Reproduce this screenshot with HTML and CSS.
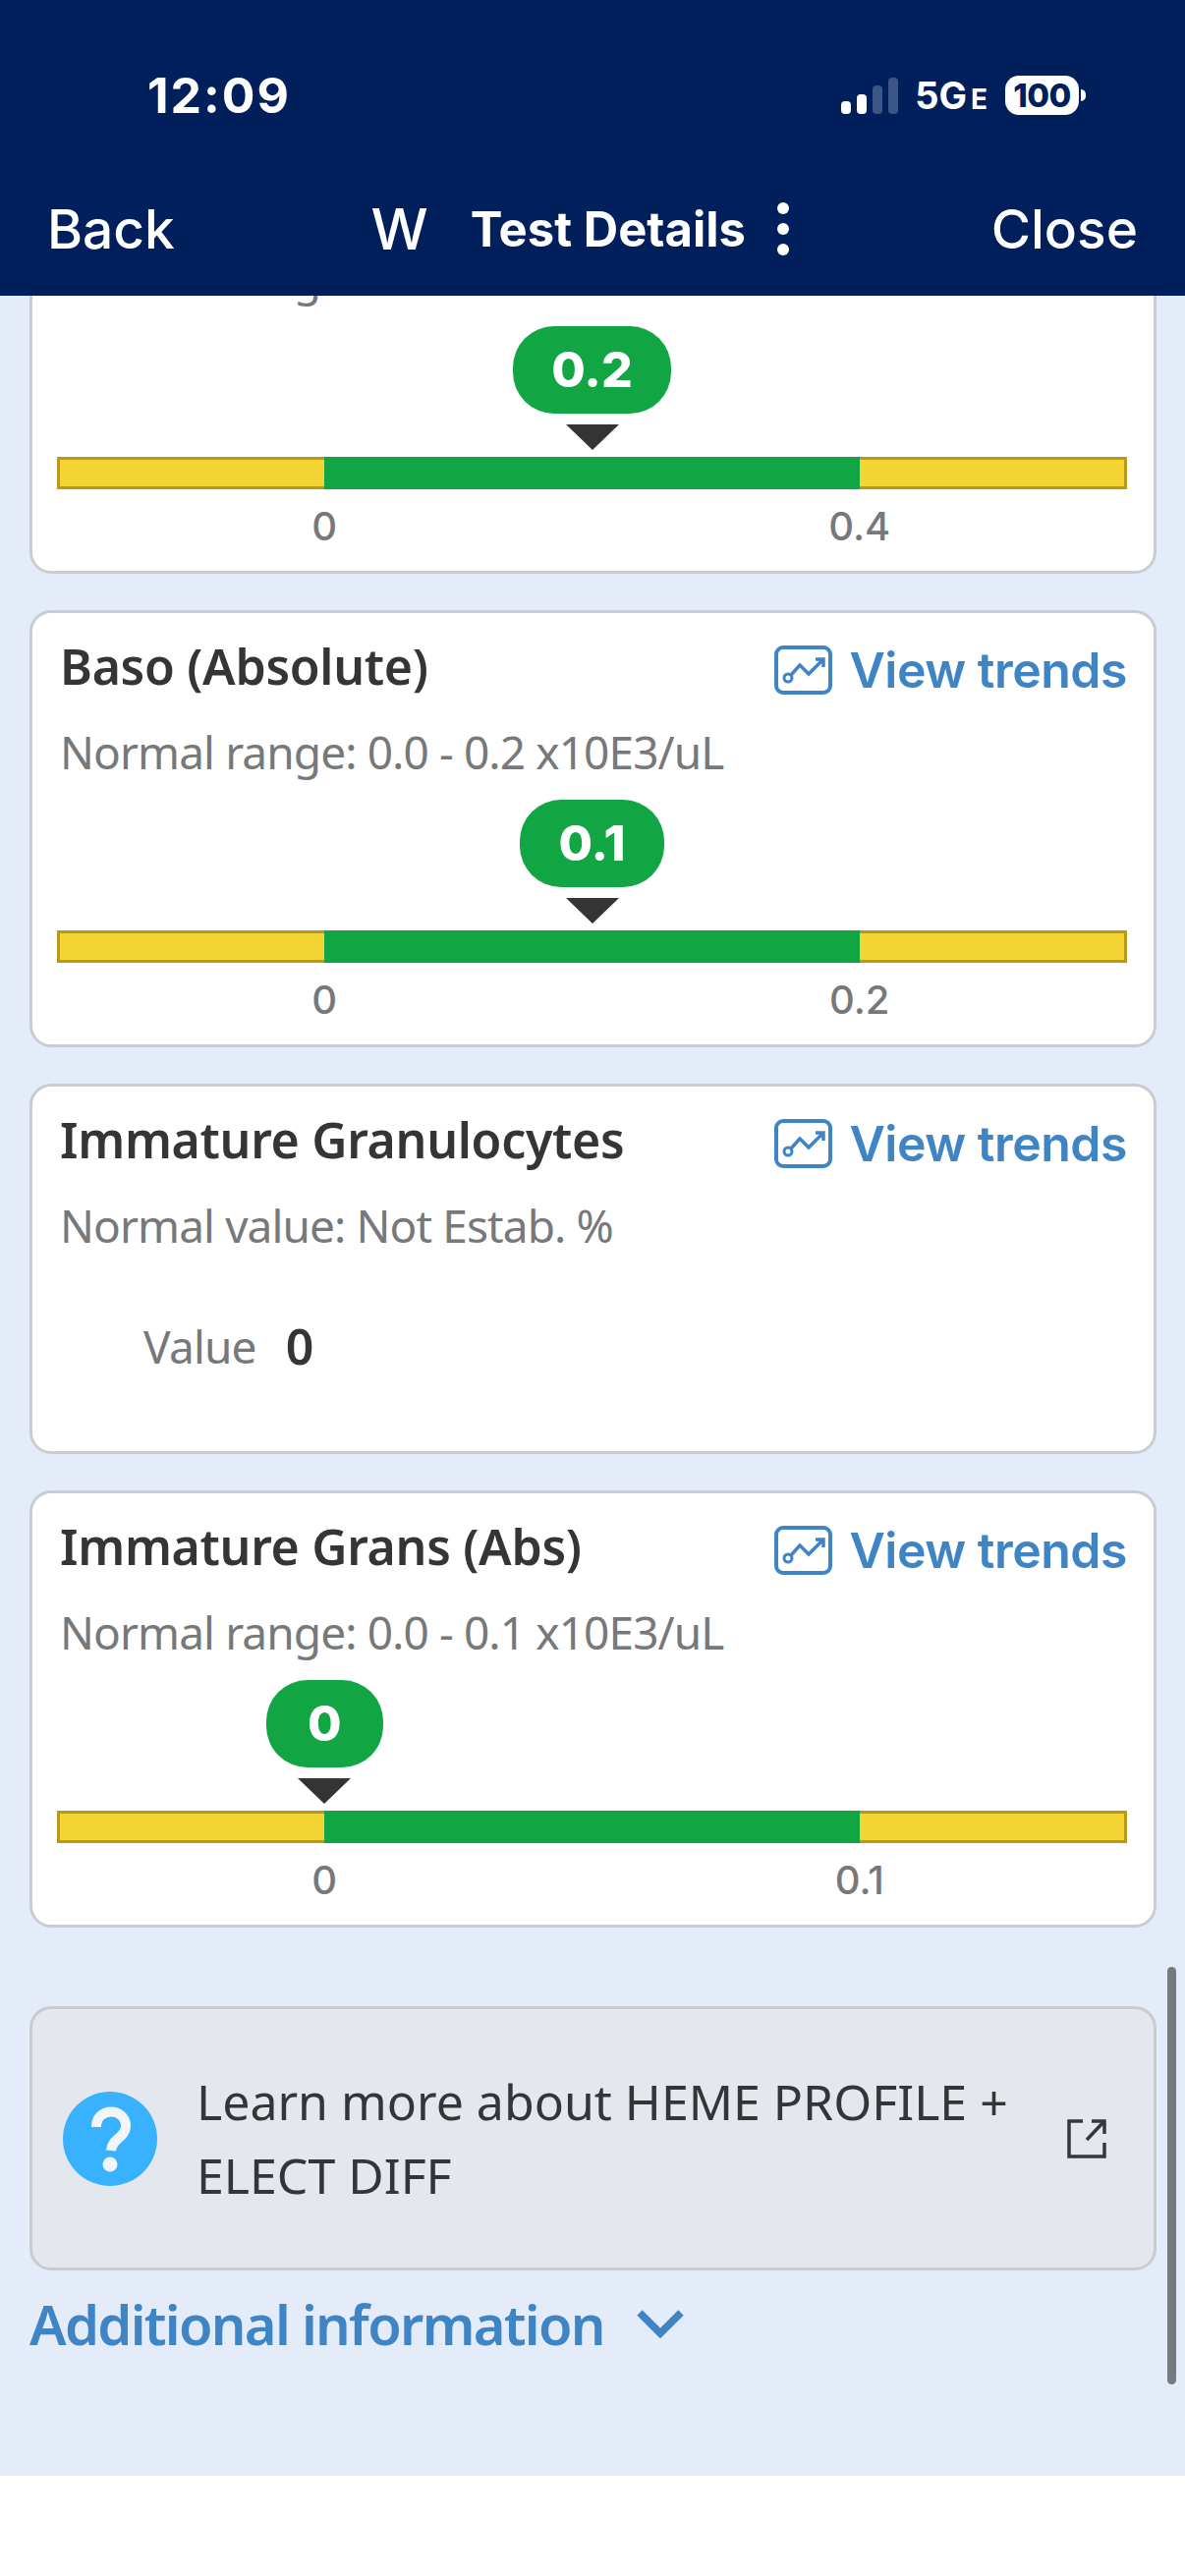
FILE: index.html
```html
<!DOCTYPE html>
<html lang="en">
<head>
    <meta charset="UTF-8">
    <title>Test Details</title>
    <link rel="stylesheet" href="styles.css">
</head>
<body>
    <header class="top-bar">
        <div class="status-row">
            <span class="clock">12:09</span>
            <div class="status-icons">
                <div class="signal">
                    <i class="sig sig-1"></i>
                    <i class="sig sig-2"></i>
                    <i class="sig sig-3"></i>
                    <i class="sig sig-4"></i>
                </div>
                <span class="net">5G<small>E</small></span>
                <div class="battery">
                    <span class="battery-body">100</span>
                    <i class="battery-nub"></i>
                </div>
            </div>
        </div>
        <nav class="nav-row">
            <span class="nav-link">Back</span>
            <div class="nav-center">
                <span class="nav-w">W</span>
                <span class="nav-title">Test Details</span>
                <span class="nav-dots"><i></i><i></i><i></i></span>
            </div>
            <span class="nav-link">Close</span>
        </nav>
    </header>

    <main class="content">
        <section class="card">
            <div class="card-head">
                <h2 class="card-title">Eos (Absolute)</h2>
            </div>
            <p class="range">Normal range: 0.0 - 0.4 x10E3/uL</p>
            <div class="marker" style="margin-left: 50%">
                <span class="pill">0.2</span>
                <i class="arrow"></i>
            </div>
            <div class="bar"><i class="bar-low"></i><i class="bar-ok"></i><i class="bar-high"></i></div>
            <div class="ticks"><span>0</span><span>0.4</span></div>
        </section>

        <section class="card">
            <div class="card-head">
                <h2 class="card-title">Baso (Absolute)</h2>
                <a class="trends">
                    <svg class="trends-icon" viewBox="0 0 59 50"><rect x="2" y="2" width="55" height="46" rx="7" fill="none" stroke="#3f85c5" stroke-width="4"/><circle cx="14" cy="33" r="4" fill="none" stroke="#3f85c5" stroke-width="3"/><path d="M17 30 L26 20 L35 29 L49 15 M42 14 H50 V22" fill="none" stroke="#3f85c5" stroke-width="3.5"/></svg>
                    View trends
                </a>
            </div>
            <p class="range">Normal range: 0.0 - 0.2 x10E3/uL</p>
            <div class="marker" style="margin-left: 50%">
                <span class="pill">0.1</span>
                <i class="arrow"></i>
            </div>
            <div class="bar"><i class="bar-low"></i><i class="bar-ok"></i><i class="bar-high"></i></div>
            <div class="ticks"><span>0</span><span>0.2</span></div>
        </section>

        <section class="card card-plain">
            <div class="card-head">
                <h2 class="card-title">Immature Granulocytes</h2>
                <a class="trends">
                    <svg class="trends-icon" viewBox="0 0 59 50"><rect x="2" y="2" width="55" height="46" rx="7" fill="none" stroke="#3f85c5" stroke-width="4"/><circle cx="14" cy="33" r="4" fill="none" stroke="#3f85c5" stroke-width="3"/><path d="M17 30 L26 20 L35 29 L49 15 M42 14 H50 V22" fill="none" stroke="#3f85c5" stroke-width="3.5"/></svg>
                    View trends
                </a>
            </div>
            <p class="range">Normal value: Not Estab. %</p>
            <div class="value-row">
                <span class="value-label">Value</span>
                <span class="value-num">0</span>
            </div>
        </section>

        <section class="card">
            <div class="card-head">
                <h2 class="card-title">Immature Grans (Abs)</h2>
                <a class="trends">
                    <svg class="trends-icon" viewBox="0 0 59 50"><rect x="2" y="2" width="55" height="46" rx="7" fill="none" stroke="#3f85c5" stroke-width="4"/><circle cx="14" cy="33" r="4" fill="none" stroke="#3f85c5" stroke-width="3"/><path d="M17 30 L26 20 L35 29 L49 15 M42 14 H50 V22" fill="none" stroke="#3f85c5" stroke-width="3.5"/></svg>
                    View trends
                </a>
            </div>
            <p class="range">Normal range: 0.0 - 0.1 x10E3/uL</p>
            <div class="marker" style="margin-left: 25%">
                <span class="pill">0</span>
                <i class="arrow"></i>
            </div>
            <div class="bar"><i class="bar-low"></i><i class="bar-ok"></i><i class="bar-high"></i></div>
            <div class="ticks"><span>0</span><span>0.1</span></div>
        </section>

        <section class="learn">
            <svg class="learn-help" viewBox="0 0 96 96"><circle cx="48" cy="48" r="48" fill="#38b1ff"/><path d="M34 36 C34 15 64 16 64 35 C64 47 50 47 49 60" fill="none" stroke="#f2f6fb" stroke-width="10"/><circle cx="48" cy="74" r="7.5" fill="#f2f6fb"/></svg>
            <p class="learn-text">Learn more about HEME PROFILE + ELECT DIFF</p>
            <svg class="learn-open" viewBox="0 0 40 40"><path d="M16 2 H2 V38 H38 V24 M20 21 L37 3 M25 2 H38 V15" fill="none" stroke="#34383c" stroke-width="3.5"/></svg>
        </section>

        <a class="more">
            Additional information
            <svg class="more-icon" viewBox="0 0 50 30"><path d="M4 4 L25 25 L46 4" fill="none" stroke="#3f85c5" stroke-width="7.5"/></svg>
        </a>

        <i class="scroll-thumb"></i>
    </main>
</body>
</html>
```
FILE: styles.css
```css
body {
    margin: 0;
    width: 1206px;
    height: 2622px;
    overflow: hidden;
    background: #fff;
    font-family: 'Noto Sans', sans-serif;
    color: #333537;
}
p, h2 { margin: 0; }
i { display: block; }

/* header */
.top-bar { height: 301px; background: #001f5b; color: #fff; box-sizing: border-box; }
.status-row { height: 194px; padding: 0 101px 0 150px; display: flex; justify-content: space-between; align-items: center; }
.clock { font-family: 'Inter', sans-serif; font-weight: 700; font-size: 50px; letter-spacing: 2px; }
.status-icons { display: flex; align-items: center; }
.signal { display: flex; align-items: flex-end; gap: 6px; height: 37px; margin-right: 17px; }
.sig { width: 10px; border-radius: 4px; background: #fff; }
.sig-1 { height: 13px; }
.sig-2 { height: 20px; }
.sig-3 { height: 29px; background: #3d5688; }
.sig-4 { height: 37px; background: #3d5688; }
.net { font-family: 'Inter', sans-serif; font-weight: 700; font-size: 38px; margin-right: 18px; }
.net small { font-size: 28px; margin-left: 4px; }
.battery { display: flex; align-items: center; gap: 2px; }
.battery-body { width: 75px; height: 40px; border-radius: 14px; background: #fff; color: #001f5b; font-family: 'Inter', sans-serif; font-weight: 800; font-size: 33px; line-height: 40px; text-align: center; letter-spacing: -0.5px; }
.battery-nub { width: 5px; height: 12px; background: #fff; border-radius: 0 6px 6px 0; }

.nav-row { height: 107px; padding: 0 48px; display: flex; justify-content: space-between; align-items: flex-start; }
.nav-link { font-family: 'Inter', sans-serif; font-weight: 500; font-size: 55px; line-height: 78px; }
.nav-center { display: flex; align-items: center; height: 78px; margin-right: 6px; }
.nav-w { font-family: 'Inter', sans-serif; font-weight: 500; font-size: 58px; margin-right: 43px; }
.nav-title { font-family: 'Inter', sans-serif; font-weight: 700; font-size: 49px; }
.nav-dots { display: flex; flex-direction: column; gap: 9px; margin-left: 32px; }
.nav-dots i { width: 12px; height: 12px; border-radius: 50%; background: #fff; }

/* scrolled part, anchored to its bottom edge */
.content { position: relative; height: 2219px; box-sizing: border-box; overflow: hidden; background: #e4ecf9; padding: 0 29px 119px 30px; display: flex; flex-direction: column; justify-content: flex-end; }
.card { flex: none; background: #fff; border: 3px solid #c9ccd1; border-radius: 22px; padding: 24px 27px 20px 25px; margin-bottom: 37px; }
.card-plain { height: 377px; box-sizing: border-box; }
.card-head { display: flex; justify-content: space-between; align-items: center; height: 60px; padding-left: 3px; }
.card-title { font-size: 50px; line-height: 60px; font-weight: 600; letter-spacing: -0.3px; color: #333537; }
.trends { display: flex; align-items: center; gap: 17px; font-family: 'Inter', sans-serif; font-weight: 600; font-size: 50px; letter-spacing: -0.5px; color: #3f85c5; margin-top: 8px; }
.trends-icon { width: 59px; height: 50px; }
.range { margin-top: 27px; padding-left: 3px; font-size: 46px; line-height: 60px; letter-spacing: -0.9px; color: #76787a; }

.marker { width: 0; margin-top: 19px; display: flex; flex-direction: column; align-items: center; }
.pill { flex: none; min-width: 41px; height: 89px; padding: 0 39px; border-radius: 42px; background: #12a544; color: #fff; font-family: 'Inter', sans-serif; font-weight: 800; font-size: 50px; line-height: 89px; text-align: center; }
.arrow { flex: none; margin-top: 11px; border-style: solid; border-width: 26px 27px 0; border-color: #343434 transparent transparent; }

.bar { margin-top: 7px; height: 33px; display: grid; grid-template-columns: 1fr 2fr 1fr; }
.bar-low, .bar-high { background: #f5d533; border: 3px solid #b99a18; box-sizing: border-box; }
.bar-low { border-right: 0; }
.bar-high { border-left: 0; }
.bar-ok { background: #12a544; }
.ticks { margin-top: 13px; display: grid; grid-template-columns: 1fr 1fr; text-align: center; font-family: 'Inter', sans-serif; font-weight: 500; font-size: 40px; line-height: 50px; color: #76787a; }

.value-row { margin-top: 63px; padding-left: 88px; display: flex; align-items: center; gap: 30px; line-height: 60px; }
.value-label { font-size: 46px; letter-spacing: -0.8px; color: #76787a; }
.value-num { font-size: 50px; font-weight: 600; }

/* learn more box */
.learn { flex: none; height: 269px; box-sizing: border-box; margin-top: 43px; background: #e4e7ee; border: 3px solid #c9cccf; border-radius: 22px; padding: 0 48px 0 31px; display: flex; align-items: center; }
.learn-help { width: 96px; height: 96px; flex: none; }
.learn-text { width: 860px; margin-left: 40px; font-size: 50px; line-height: 75px; color: #333537; }
.learn-open { width: 40px; height: 40px; flex: none; margin-left: auto; }

.more { margin-top: 18px; display: flex; align-items: center; gap: 32px; font-size: 56px; line-height: 72px; font-weight: 600; letter-spacing: -1.7px; color: #3f85c5; }
.more-icon { width: 50px; height: 30px; }

.scroll-thumb { position: absolute; right: 9px; bottom: 93px; width: 9px; height: 425px; border-radius: 5px; background: #747b80; }
```
